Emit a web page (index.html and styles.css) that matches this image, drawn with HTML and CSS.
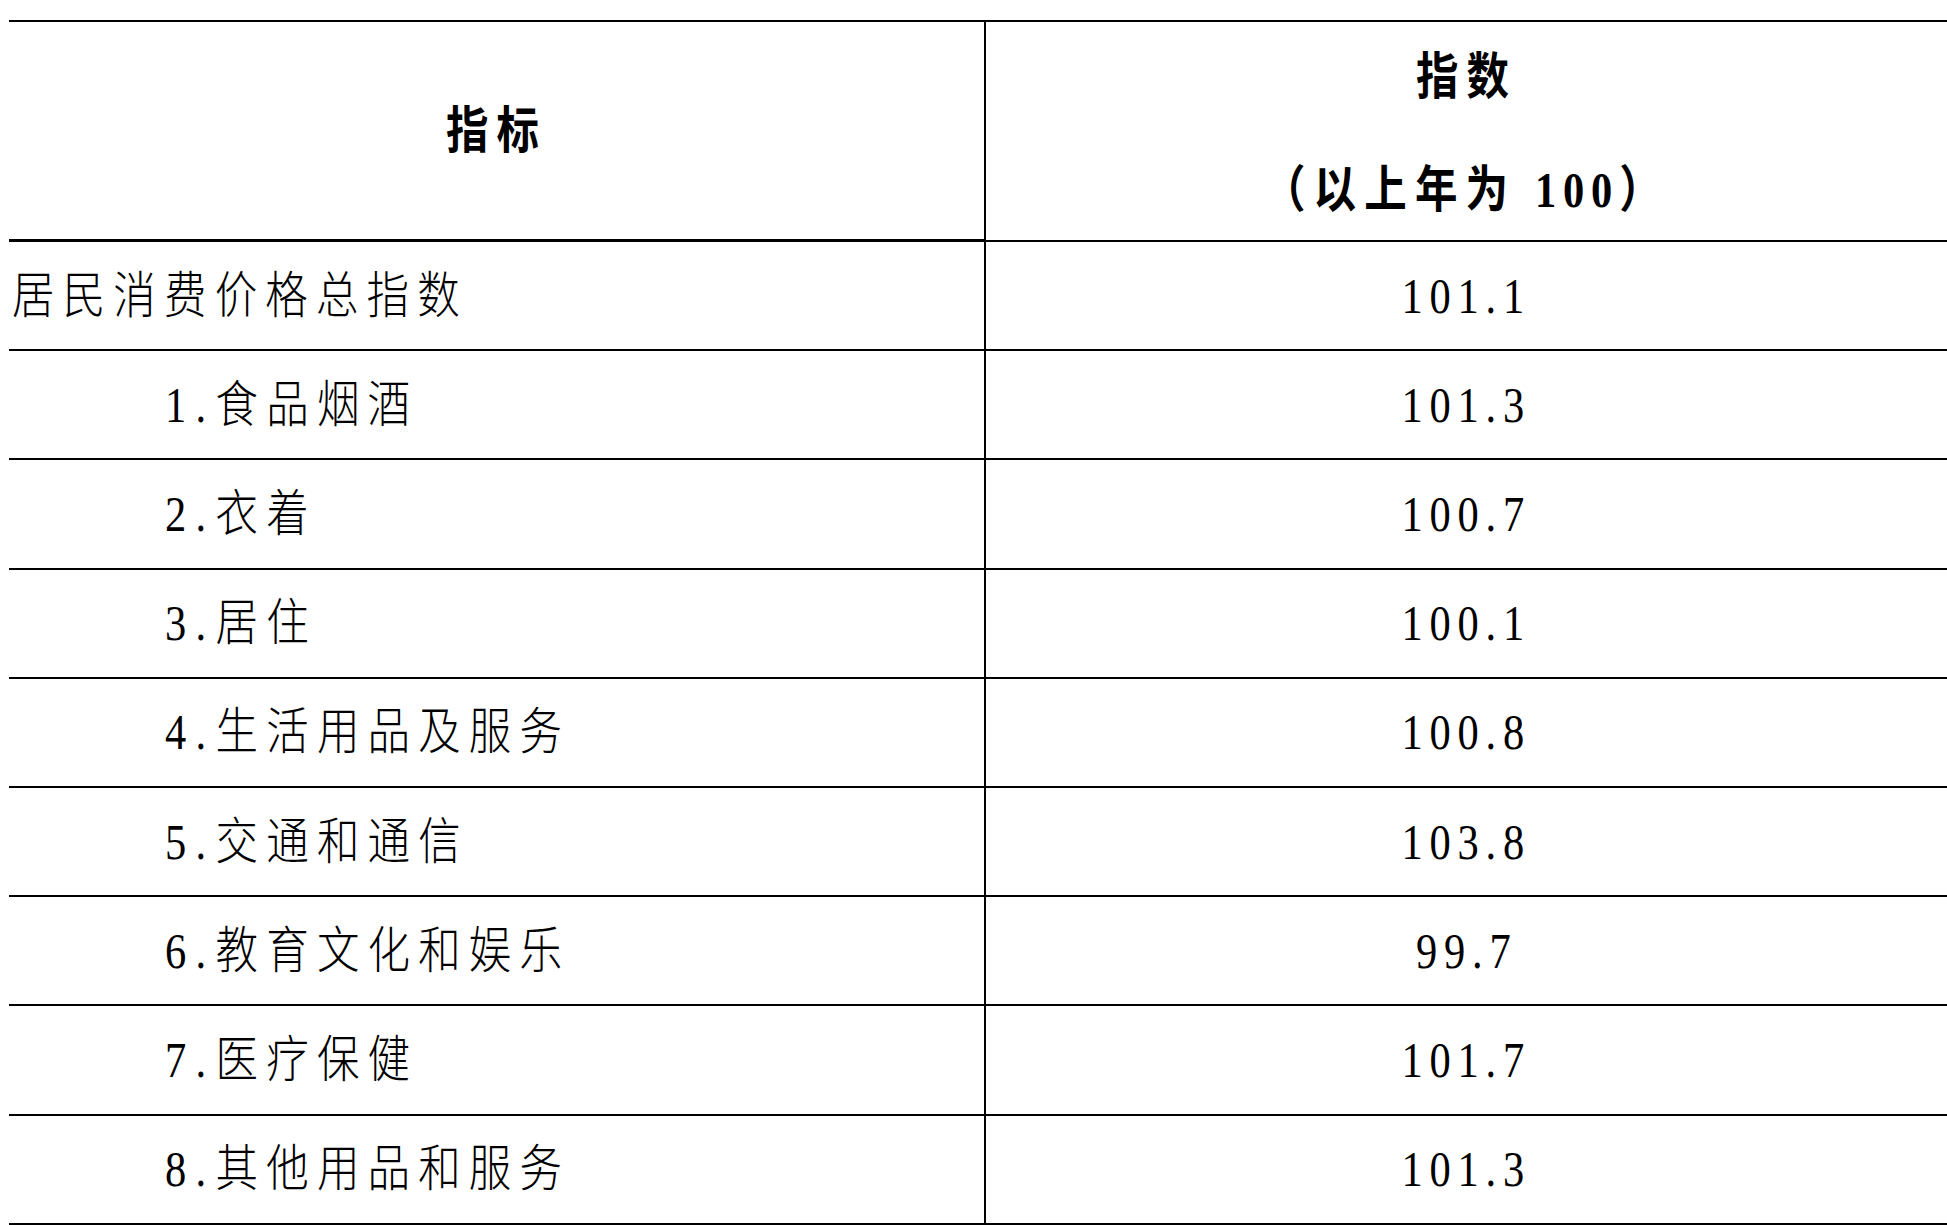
FILE: index.html
```html
<!DOCTYPE html>
<html lang="zh-CN">
<head>
<meta charset="utf-8">
<title>居民消费价格指数</title>
<link rel="stylesheet" href="styles.css">
</head>
<body>
<div class="sheet">
  <div class="tbl">
    <div class="cell head l center"><span class="txt bold mid">指标</span></div>
    <div class="cell head r">
      <div class="hline"><span class="txt bold mid">指数</span></div>
      <div class="hline"><span class="txt bold mid">（以上年为 <span class="num">100</span>）</span></div>
    </div>

    <div class="cell l"><span class="txt total">居民消费价格总指数</span></div>
    <div class="cell r center"><span class="txt num mid">101.1</span></div>

    <div class="cell l item"><span class="txt"><span class="num pre">1.</span>食品烟酒</span></div>
    <div class="cell r center"><span class="txt num mid">101.3</span></div>

    <div class="cell l item"><span class="txt"><span class="num pre">2.</span>衣着</span></div>
    <div class="cell r center"><span class="txt num mid">100.7</span></div>

    <div class="cell l item"><span class="txt"><span class="num pre">3.</span>居住</span></div>
    <div class="cell r center"><span class="txt num mid">100.1</span></div>

    <div class="cell l item"><span class="txt"><span class="num pre">4.</span>生活用品及服务</span></div>
    <div class="cell r center"><span class="txt num mid">100.8</span></div>

    <div class="cell l item"><span class="txt"><span class="num pre">5.</span>交通和通信</span></div>
    <div class="cell r center"><span class="txt num mid">103.8</span></div>

    <div class="cell l item"><span class="txt"><span class="num pre">6.</span>教育文化和娱乐</span></div>
    <div class="cell r center"><span class="txt num mid">99.7</span></div>

    <div class="cell l item"><span class="txt"><span class="num pre">7.</span>医疗保健</span></div>
    <div class="cell r center"><span class="txt num mid">101.7</span></div>

    <div class="cell l item"><span class="txt"><span class="num pre">8.</span>其他用品和服务</span></div>
    <div class="cell r center"><span class="txt num mid">101.3</span></div>
  </div>
</div>
</body>
</html>
```
FILE: styles.css
```css
html, body {
  margin: 0;
  padding: 0;
  background: #ffffff;
}

body {
  font-family: "Liberation Serif", "Noto Sans CJK SC", serif;
  color: #000000;
}

.sheet {
  padding: 20px 0 0 9px;
}

.tbl {
  display: grid;
  grid-template-columns: 977px 961px;
  width: 1938px;
  border-top: 2px solid #000000;
}

.cell {
  box-sizing: border-box;
  height: 109.2px;
  border-bottom: 2px solid #000000;
  display: flex;
  align-items: center;
}

.cell.l {
  border-right: 2px solid #000000;
}

.cell.center {
  justify-content: center;
}

.cell.head {
  height: 220px;
}

.cell.head.l {
  border-bottom-width: 3px;
}

.cell.head.r {
  flex-direction: column;
  justify-content: center;
  gap: 53px;
  padding-top: 5px;
}

.hline {
  height: 60px;
  display: flex;
  align-items: center;
  justify-content: center;
}

.txt {
  display: inline-block;
  white-space: nowrap;
  font-size: 50px;
  font-weight: 300;
  letter-spacing: 9.6px;
  line-height: 60px;
  transform: scaleX(0.85);
  transform-origin: left center;
}

.txt.mid {
  transform-origin: center center;
}

.txt.bold {
  font-weight: 700;
}

.num {
  letter-spacing: 8px;
}

.num.pre {
  letter-spacing: 11px;
}

.cell.l.item {
  padding-left: 156px;
}

.cell.l .total {
  margin-left: 3px;
}
```
